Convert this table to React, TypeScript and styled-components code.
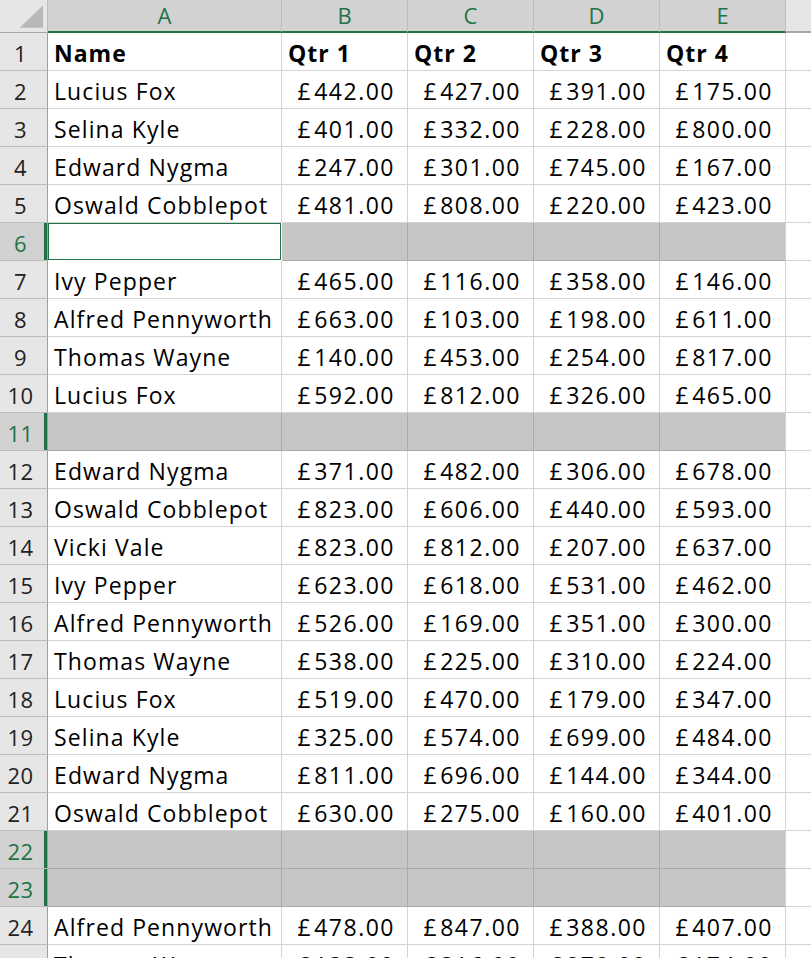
import styled, { createGlobalStyle } from "styled-components";

const GlobalStyle = createGlobalStyle`
  html, body {
    margin: 0;
    padding: 0;
    background: #ffffff;
    overflow: hidden;
  }
  body {
    font-family: "Open Sans", "Noto Sans", sans-serif;
  }
`;

type Row = { name: string; q: number[] } | null;

const rows: Row[] = [
  { name: "Lucius Fox", q: [442, 427, 391, 175] },
  { name: "Selina Kyle", q: [401, 332, 228, 800] },
  { name: "Edward Nygma", q: [247, 301, 745, 167] },
  { name: "Oswald Cobblepot", q: [481, 808, 220, 423] },
  null,
  { name: "Ivy Pepper", q: [465, 116, 358, 146] },
  { name: "Alfred Pennyworth", q: [663, 103, 198, 611] },
  { name: "Thomas Wayne", q: [140, 453, 254, 817] },
  { name: "Lucius Fox", q: [592, 812, 326, 465] },
  null,
  { name: "Edward Nygma", q: [371, 482, 306, 678] },
  { name: "Oswald Cobblepot", q: [823, 606, 440, 593] },
  { name: "Vicki Vale", q: [823, 812, 207, 637] },
  { name: "Ivy Pepper", q: [623, 618, 531, 462] },
  { name: "Alfred Pennyworth", q: [526, 169, 351, 300] },
  { name: "Thomas Wayne", q: [538, 225, 310, 224] },
  { name: "Lucius Fox", q: [519, 470, 179, 347] },
  { name: "Selina Kyle", q: [325, 574, 699, 484] },
  { name: "Edward Nygma", q: [811, 696, 144, 344] },
  { name: "Oswald Cobblepot", q: [630, 275, 160, 401] },
  null,
  null,
  { name: "Alfred Pennyworth", q: [478, 847, 388, 407] },
  { name: "Thomas Wayne", q: [133, 316, 278, 174] },
];

// column F is only a sliver at the right edge, its letter is off-screen
const columns = ["A", "B", "C", "D", "E", ""];

export default function App() {
  return (
    <>
      <GlobalStyle />
      <Sheet>
        <Corner>
          <svg width="48" height="32" viewBox="0 0 48 32">
            <polygon points="44,5 44,28 20,28" fill="#b8b8b8" />
          </svg>
        </Corner>
        {columns.map((c, i) => (
          <ColHeader key={i} $selected={c !== ""}>
            {c}
          </ColHeader>
        ))}

        <RowHeader $selected={false}>1</RowHeader>
        <Cell $bold>Name</Cell>
        <Cell $bold>Qtr 1</Cell>
        <Cell $bold>Qtr 2</Cell>
        <Cell $bold>Qtr 3</Cell>
        <Cell $bold>Qtr 4</Cell>
        <Cell />

        {rows.map((r, i) => {
          const n = i + 2;
          if (!r) {
            return [
              <RowHeader key={`h${n}`} $selected>
                {n}
              </RowHeader>,
              n === 6 ? (
                <ActiveCell key={`a${n}`} />
              ) : (
                <Cell key={`a${n}`} $selected />
              ),
              ...[0, 1, 2, 3].map((k) => (
                <Cell key={`${k}${n}`} $selected $last={k === 3} />
              )),
              <Cell key={`f${n}`} />,
            ];
          }
          return [
            <RowHeader key={`h${n}`} $selected={false}>
              {n}
            </RowHeader>,
            <Cell key={`a${n}`}>{r.name}</Cell>,
            ...r.q.map((v, k) => (
              <Cell key={`${k}${n}`} $numeric>
                <Pound>£</Pound>
                {v.toFixed(2)}
              </Cell>
            )),
            <Cell key={`f${n}`} />,
          ];
        })}
      </Sheet>
    </>
  );
}

const Sheet = styled.div`
  display: grid;
  grid-template-columns: 48px 234px 126px 126px 126px 126px 126px;
  grid-auto-rows: 38px;
  grid-template-rows: 33px;
  width: 811px;
  height: 958px;
  overflow: hidden;
  color: #000000;
`;

const Corner = styled.div`
  background: #e6e6e6;
  border-right: 1px solid #bcbcbc;
  border-bottom: 1px solid #a6a6a6;
  box-sizing: border-box;
  display: flex;

  svg {
    display: block;
  }
`;

const ColHeader = styled.div<{ $selected: boolean }>`
  box-sizing: border-box;
  background: ${(p) => (p.$selected ? "#d2d2d2" : "#e6e6e6")};
  color: ${(p) => (p.$selected ? "#217346" : "#444444")};
  border-right: 1px solid #bcbcbc;
  border-bottom: ${(p) =>
    p.$selected ? "2px solid #217346" : "2px solid #a6a6a6"};
  display: flex;
  align-items: center;
  justify-content: center;
  font-size: 22px;
  padding-bottom: 1px;
`;

const RowHeader = styled.div<{ $selected: boolean }>`
  box-sizing: border-box;
  background: ${(p) => (p.$selected ? "#d2d2d2" : "#e6e6e6")};
  color: ${(p) => (p.$selected ? "#217346" : "#222222")};
  border-bottom: 1px solid #bcbcbc;
  border-right: 1px solid #9e9e9e;
  box-shadow: ${(p) => (p.$selected ? "inset -3px 0 0 #217346" : "none")};
  display: flex;
  align-items: center;
  justify-content: center;
  font-size: 22px;
  letter-spacing: 0.5px;
  padding: 3px 6px 0 0;
`;

const Cell = styled.div<{
  $bold?: boolean;
  $numeric?: boolean;
  $selected?: boolean;
  $last?: boolean;
}>`
  box-sizing: border-box;
  background: ${(p) => (p.$selected ? "#c6c6c6" : "#ffffff")};
  border-right: 1px solid
    ${(p) => (p.$selected && !p.$last ? "#ababab" : "#d4d4d4")};
  border-bottom: 1px solid ${(p) => (p.$selected ? "#ababab" : "#d4d4d4")};
  display: flex;
  align-items: center;
  justify-content: ${(p) => (p.$numeric ? "flex-end" : "flex-start")};
  padding: ${(p) => (p.$numeric ? "3px 12px 0 6px" : "3px 6px 0")};
  font-size: 23px;
  letter-spacing: ${(p) => (p.$bold ? "1px" : p.$numeric ? "1.5px" : "1.1px")};
  font-weight: ${(p) => (p.$bold ? 700 : 400)};
  white-space: nowrap;
  overflow: hidden;
`;

const Pound = styled.span`
  margin-right: 2px;
`;

const ActiveCell = styled.div`
  box-sizing: border-box;
  background: #ffffff;
  border: 1px solid #217346;
  margin: 0 1px 1px 0;
`;
